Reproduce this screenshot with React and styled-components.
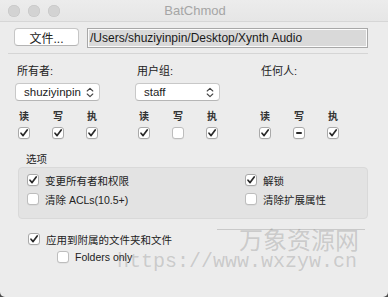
import React from "react";
import styled, { createGlobalStyle } from "styled-components";

const GlobalStyle = createGlobalStyle`
  html, body {
    margin: 0;
    padding: 0;
    background: #4a4a4a;
  }
  body {
    font-family: "Liberation Sans", "Noto Sans CJK SC", sans-serif;
    color: #222;
    -webkit-font-smoothing: antialiased;
  }
`;

const Check = ({ state = "on" }) => (
  <Box $state={state}>
    {state === "on" && (
      <svg width="10" height="10" viewBox="0 0 10 10">
        <path d="M2 5.2 L4.1 7.6 L8.2 2" fill="none" stroke="#2a2a2a" strokeWidth="1.7" strokeLinecap="round" strokeLinejoin="round" />
      </svg>
    )}
    {state === "mixed" && <Dash />}
  </Box>
);

const Popup = ({ value }) => (
  <Select>
    <span>{value}</span>
    <svg width="8" height="11" viewBox="0 0 8 11">
      <path d="M1.2 4 L4 1.3 L6.8 4 M1.2 7 L4 9.7 L6.8 7" fill="none" stroke="#444" strokeWidth="1.1" strokeLinecap="round" strokeLinejoin="round" />
    </svg>
  </Select>
);

const groups = [
  { title: "所有者:", inset: 10, popup: "shuziyinpin", perms: ["on", "on", "on"] },
  { title: "用户组:", inset: 10, popup: "staff", perms: ["on", "off", "on"] },
  { title: "任何人:", inset: 13, perms: ["on", "mixed", "on"] },
];

const App = () => {
  return (
    <Window>
      <GlobalStyle />
      <TitleBar>
        <Lights>
          <Light />
          <Light />
          <Light />
        </Lights>
        <Title>BatChmod</Title>
      </TitleBar>

      <FileRow>
        <Button>文件...</Button>
        <PathField>/Users/shuziyinpin/Desktop/Xynth Audio</PathField>
      </FileRow>
      <Separator />

      <Columns>
        {groups.map((g) => (
          <Column key={g.title}>
            <Header $inset={g.inset}>{g.title}</Header>
            <PopupSlot>{g.popup && <Popup value={g.popup} />}</PopupSlot>
            <Perms>
              <PermLabel>读</PermLabel>
              <PermLabel>写</PermLabel>
              <PermLabel>执</PermLabel>
              {g.perms.map((p, i) => (
                <Check key={i} state={p} />
              ))}
            </Perms>
          </Column>
        ))}
      </Columns>

      <Options>
        <SectionLabel>选项</SectionLabel>
        <GroupBox>
          <OptRow>
            <Check state="on" />
            <span>变更所有者和权限</span>
          </OptRow>
          <OptRow>
            <Check state="on" />
            <span>解锁</span>
          </OptRow>
          <OptRow>
            <Check state="off" />
            <span>清除 ACLs(10.5+)</span>
          </OptRow>
          <OptRow>
            <Check state="off" />
            <span>清除扩展属性</span>
          </OptRow>
        </GroupBox>
      </Options>

      <Recursive>
        <OptRow>
          <Check state="on" />
          <span>应用到附属的文件夹和文件</span>
        </OptRow>
        <OptRow $indent>
          <Check state="off" />
          <span>Folders only</span>
        </OptRow>
      </Recursive>

      <Watermark>
        <MarkRule />
        <MarkTitle>万象资源网</MarkTitle>
        <MarkUrl>https://www.wxzyw.cn</MarkUrl>
      </Watermark>
    </Window>
  );
};

export default App;

const Window = styled.div`
  position: relative;
  width: 388px;
  height: 297px;
  background: #ececec;
  border-radius: 0 0 5px 5px;
  overflow: hidden;
  display: flex;
  flex-direction: column;
`;

const TitleBar = styled.div`
  position: relative;
  height: 22px;
  display: flex;
  align-items: center;
  justify-content: center;
  background: linear-gradient(#ececec, #e6e6e6);
  border-bottom: 1px solid #d6d6d6;
  box-sizing: border-box;
`;

const Lights = styled.div`
  position: absolute;
  left: 8px;
  top: 5px;
  display: flex;
  gap: 8px;
`;

const Light = styled.div`
  width: 12px;
  height: 12px;
  border-radius: 50%;
  background: #d3d3d3;
  box-shadow: inset 0 0 0 0.5px #c4c4c4;
`;

const Title = styled.div`
  font-size: 13px;
  color: #a5a5a5;
  margin-left: 2px;
`;

const FileRow = styled.div`
  display: flex;
  align-items: flex-start;
  gap: 8px;
  padding: 6px 0 0 14px;
`;

const Button = styled.div`
  width: 65px;
  height: 18px;
  box-sizing: border-box;
  display: flex;
  align-items: center;
  justify-content: center;
  background: #fff;
  border: 1px solid #c6c6c6;
  border-bottom-color: #b4b4b4;
  border-radius: 4px;
  font-size: 12px;
  color: #222;
`;

const PathField = styled.div`
  width: 281px;
  height: 20px;
  box-sizing: border-box;
  border: 1px solid #a8a8a8;
  box-shadow: inset 0 0 0 1px #fbfbfb;
  background: #d9d9d9;
  font-size: 12px;
  line-height: 18px;
  padding-left: 2px;
  color: #1a1a1a;
  white-space: nowrap;
`;

const Separator = styled.div`
  height: 1px;
  margin: 5px 20px 0 8px;
  background: #d5d5d5;
`;

const Columns = styled.div`
  display: grid;
  grid-template-columns: 120px 121px 1fr;
  padding: 10px 0 0 7px;
`;

const Column = styled.div`
  display: flex;
  flex-direction: column;
`;

const Header = styled.div`
  font-size: 11px;
  line-height: 15px;
  padding-left: ${(p) => p.$inset}px;
  color: #222;
`;

const PopupSlot = styled.div`
  height: 18px;
  margin-top: 4px;
  padding-left: 8px;
`;

const Select = styled.div`
  width: 85px;
  height: 18px;
  box-sizing: border-box;
  display: flex;
  align-items: center;
  justify-content: space-between;
  padding: 0 5px 0 8px;
  background: #fff;
  border: 1px solid #c8c8c8;
  border-bottom-color: #b6b6b6;
  border-radius: 4px;
  font-size: 11.5px;
  color: #222;
`;

const Perms = styled.div`
  display: grid;
  grid-template-columns: repeat(3, 34px);
  justify-items: center;
  row-gap: 4px;
  margin-top: 9px;
`;

const PermLabel = styled.div`
  font-size: 10px;
  line-height: 13px;
  font-weight: bold;
  color: #333;
`;

const Box = styled.div`
  width: 12px;
  height: 12px;
  box-sizing: border-box;
  flex: none;
  display: flex;
  align-items: center;
  justify-content: center;
  background: #fff;
  border: 1px solid ${(p) => (p.$state === "off" ? "#bdbdbd" : "#a9a9a9")};
  border-radius: 3px;
  box-shadow: 0 0.5px 0 rgba(0, 0, 0, 0.08);
`;

const Dash = styled.div`
  width: 6px;
  height: 2px;
  background: #2a2a2a;
  border-radius: 1px;
`;

const Options = styled.div`
  margin: 14px 20px 0 18px;
`;

const SectionLabel = styled.div`
  font-size: 10.5px;
  line-height: 13px;
  padding-left: 8px;
  color: #222;
`;

const GroupBox = styled.div`
  margin-top: 1px;
  height: 52px;
  box-sizing: border-box;
  display: grid;
  grid-template-columns: 218px 1fr;
  row-gap: 5px;
  align-content: start;
  padding: 5px 8px 0;
  background: #e3e3e3;
  border: 1px solid #d9d9d9;
  border-radius: 4px;
`;

const OptRow = styled.div`
  display: flex;
  align-items: center;
  gap: 6px;
  height: 14px;
  font-size: 10.5px;
  color: #222;
  padding-left: ${(p) => (p.$indent ? 29 : 0)}px;
`;

const Recursive = styled.div`
  display: flex;
  flex-direction: column;
  gap: 4px;
  margin: 13px 0 0 28px;
`;

const Watermark = styled.div`
  position: absolute;
  left: 0;
  top: 0;
  right: 0;
  bottom: 0;
  pointer-events: none;
`;

const MarkRule = styled.div`
  position: absolute;
  left: 217px;
  top: 229px;
  width: 148px;
  height: 1px;
  background: rgba(120, 120, 120, 0.3);
`;

const MarkTitle = styled.div`
  position: absolute;
  left: 239px;
  top: 226px;
  font-size: 24px;
  line-height: 26px;
  color: rgba(120, 120, 120, 0.3);
  font-family: "Noto Sans CJK SC", sans-serif;
`;

const MarkUrl = styled.div`
  position: absolute;
  left: 117px;
  top: 251px;
  font-size: 20px;
  line-height: 22px;
  color: rgba(120, 120, 120, 0.3);
  font-family: "Liberation Mono", monospace;
`;
